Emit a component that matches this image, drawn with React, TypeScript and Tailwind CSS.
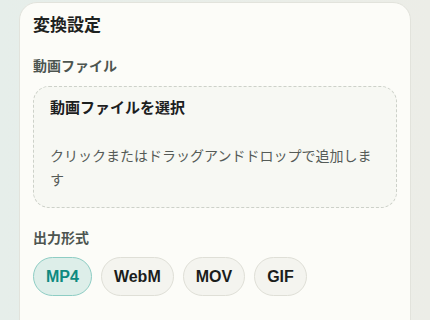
const formats = ['MP4', 'WebM', 'MOV', 'GIF']

export default function App() {
  const selected = 'MP4'
  return (
    <div
      className="w-[430px] h-[320px] overflow-hidden bg-[linear-gradient(90deg,#e6eeea,#ecede7)] pl-[19px] pt-[2px]"
      style={{ fontFamily: '"Liberation Sans", "Noto Sans CJK JP", sans-serif' }}
    >
      <div className="w-[392px] h-[340px] rounded-[18px] border border-[#e2e3dc] bg-[#fcfcf8] px-[13px] pt-[13px]">
        {/* タイトル */}
        <h2 className="text-[17px] leading-[20px] font-bold text-[#1e2220]">変換設定</h2>

        {/* 動画ファイル */}
        <div className="mt-[20px] text-[14px] leading-[20px] font-bold text-[#4d5550]">動画ファイル</div>
        <div className="mt-[10px] h-[122px] rounded-[16px] border border-dashed border-[#cdd1c9] bg-[#f7f8f3] px-[16px] pt-[11px]">
          <div className="text-[15px] leading-[20px] font-bold text-[#1c201e]">動画ファイルを選択</div>
          <p className="mt-[26px] text-[14px] leading-[24px] text-[#555b57]">
            クリックまたはドラッグアンドドロップで追加します
          </p>
        </div>

        {/* 出力形式 */}
        <div className="mt-[20px] text-[14px] leading-[20px] font-bold text-[#4d5550]">出力形式</div>
        <div className="mt-[9px] flex gap-[9px]">
          {formats.map((f) => (
            <button
              key={f}
              type="button"
              className={
                f === selected
                  ? 'h-[39px] rounded-full border border-[#8ecdc4] bg-[#ddeee9] px-[12px] text-[16px] font-bold text-[#0e8a80]'
                  : 'h-[39px] rounded-full border border-[#dfdfd7] bg-[#f4f4ef] px-[12px] text-[16px] font-bold text-[#1b1d1c]'
              }
            >
              {f}
            </button>
          ))}
        </div>
      </div>
    </div>
  )
}
